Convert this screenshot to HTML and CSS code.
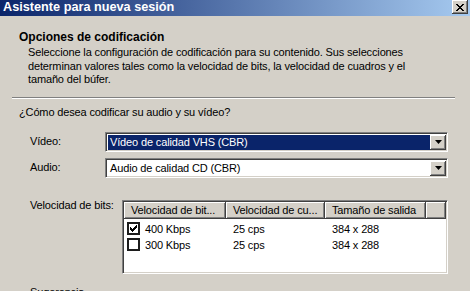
FILE: index.html
```html
<!DOCTYPE html>
<html lang="es">
<head>
    <meta charset="UTF-8">
    <meta name="viewport" content="width=device-width, initial-scale=1.0">
    <title>Asistente para nueva sesión</title>
    <link rel="stylesheet" href="styles.css">
</head>
<body>
    <div class="titlebar">
        <span class="title">Asistente para nueva sesión</span>
        <button class="close-btn" aria-label="Cerrar">
            <svg width="8" height="7" viewBox="0 0 8 7">
                <path d="M0 0h2v1h1v1h2v-1h1v-1h2v1h-1v1h-1v1h-1v1h1v1h1v1h1v1h-2v-1h-1v-1h-2v1h-1v1h-2v-1h1v-1h1v-1h1v-1h-1v-1h-1v-1h-1z" fill="#000"/>
            </svg>
        </button>
    </div>

    <div class="header">
        <h1 class="header-title">Opciones de codificación</h1>
        <p class="header-desc">Seleccione la configuración de codificación para su contenido. Sus selecciones<br>determinan valores tales como la velocidad de bits, la velocidad de cuadros y el<br>tamaño del búfer.</p>
    </div>

    <div class="separator"></div>

    <div class="content">
        <p class="question">¿Cómo desea codificar su audio y su vídeo?</p>

        <div class="field first">
            <label class="field-label">Vídeo:</label>
            <div class="combo">
                <span class="combo-value selected">Vídeo de calidad VHS (CBR)</span>
                <span class="combo-btn">
                    <svg width="7" height="4" viewBox="0 0 7 4"><path d="M0 0h7l-3.5 4z" fill="#000"/></svg>
                </span>
            </div>
        </div>

        <div class="field">
            <label class="field-label">Audio:</label>
            <div class="combo">
                <span class="combo-value">Audio de calidad CD (CBR)</span>
                <span class="combo-btn">
                    <svg width="7" height="4" viewBox="0 0 7 4"><path d="M0 0h7l-3.5 4z" fill="#000"/></svg>
                </span>
            </div>
        </div>

        <div class="field list-field">
            <label class="field-label wide">Velocidad de bits:</label>
            <div class="listview">
                <div class="list-header">
                    <span class="col col1">Velocidad de bit...</span>
                    <span class="col col2">Velocidad de cu...</span>
                    <span class="col col3">Tamaño de salida</span>
                    <span class="col col-fill"></span>
                </div>
                <div class="list-row">
                    <span class="cell col1">
                        <span class="checkbox checked">
                            <svg width="7" height="7" viewBox="0 0 7 7"><path d="M0 2h1v1h1v1h1v-1h1v-1h1v-1h1v-1h1v3h-1v1h-1v1h-1v1h-1v1h-1v-1h-1v-1h-1z" fill="#000"/></svg>
                        </span>400 Kbps
                    </span>
                    <span class="cell col2">25 cps</span>
                    <span class="cell col3">384 x 288</span>
                </div>
                <div class="list-row">
                    <span class="cell col1"><span class="checkbox"></span>300 Kbps</span>
                    <span class="cell col2">25 cps</span>
                    <span class="cell col3">384 x 288</span>
                </div>
            </div>
        </div>

        <p class="hint">Sugerencia</p>
    </div>
</body>
</html>
```

FILE: styles.css
```css
* {
    margin: 0;
    padding: 0;
    box-sizing: border-box;
}

body {
    background: #d4d0c8;
    color: #000;
    font-family: 'Liberation Sans', Arial, sans-serif;
    font-size: 11px;
    line-height: 13px;
    letter-spacing: -0.14px;
    overflow: hidden;
}

/* title bar */
.titlebar {
    height: 16px;
    display: flex;
    justify-content: space-between;
    align-items: flex-start;
    padding: 0 2px 0 3px;
    background: linear-gradient(to right, #0a246a, #a6caf0);
}

.title {
    color: #fff;
    font-weight: bold;
    font-size: 12.7px;
    line-height: 15px;
    letter-spacing: 0;
}

.close-btn {
    width: 16px;
    height: 14px;
    display: flex;
    align-items: center;
    justify-content: center;
    background: #d4d0c8;
    border: none;
    box-shadow: inset -1px -1px #404040, inset 1px 1px #fff, inset -2px -2px #808080;
}

/* header */
.header {
    padding: 14px 0 0 19px;
}

.header-title {
    font-size: 12px;
    font-weight: bold;
    line-height: 14px;
    letter-spacing: 0;
    margin-bottom: 2px;
}

.header-desc {
    padding-left: 9px;
    line-height: 13.5px;
}

.separator {
    margin: 10px 15px 0 12px;
    border-top: 1px solid #808080;
    border-bottom: 1px solid #fff;
}

/* body */
.content {
    padding: 7px 0 0 19px;
}

.field {
    display: flex;
    align-items: center;
    margin-top: 6px;
    padding-left: 11px;
}

.field.first {
    margin-top: 13px;
}

.field-label {
    width: 75px;
}

.field-label.wide {
    width: 92px;
}

.combo {
    width: 343px;
    height: 20px;
    display: flex;
    background: #fff;
    border-top: 1px solid #808080;
    border-left: 1px solid #808080;
    border-bottom: 1px solid #fff;
    border-right: 1px solid #fff;
    box-shadow: inset 1px 1px #404040, inset -1px -1px #d4d0c8;
    padding: 2px 1px 1px 2px;
}

.combo-value {
    flex: 1;
    padding-left: 2px;
    line-height: 14px;
}

.combo-value.selected {
    background: #0a246a;
    color: #fff;
}

.combo-btn {
    width: 16px;
    height: 15px;
    display: flex;
    align-items: center;
    justify-content: center;
    background: #d4d0c8;
    box-shadow: inset -1px -1px #404040, inset 1px 1px #fff, inset -2px -2px #808080;
}

/* list view */
.list-field {
    align-items: flex-start;
    margin-top: 22px;
}

.list-field .field-label {
    margin-top: -1px;
}

.listview {
    width: 326px;
    height: 74px;
    background: #fff;
    border-top: 1px solid #808080;
    border-left: 1px solid #808080;
    border-bottom: 1px solid #fff;
    border-right: 1px solid #fff;
    box-shadow: inset 1px 1px #404040, inset -1px -1px #d4d0c8;
    padding: 1px;
}

.list-header {
    display: flex;
    height: 17px;
}

.list-header .col {
    height: 17px;
    line-height: 16px;
    padding-left: 7px;
    background: #d4d0c8;
    box-shadow: inset -1px -1px #404040, inset 1px 1px #fff, inset -2px -2px #808080;
    white-space: nowrap;
    overflow: hidden;
}

.col1 {
    width: 102px;
}

.col2 {
    width: 99px;
}

.col3 {
    width: 101px;
}

.col-fill {
    flex: 1;
}

.list-row {
    display: flex;
    height: 16px;
    align-items: center;
}

.list-header + .list-row {
    margin-top: 2px;
}

.cell {
    padding-left: 7px;
    line-height: 16px;
    white-space: nowrap;
}

.cell.col1 {
    display: flex;
    align-items: center;
    padding-left: 3px;
}

.checkbox {
    width: 13px;
    height: 13px;
    margin-right: 5px;
    display: flex;
    align-items: center;
    justify-content: center;
    border: 2px solid #1c1c1c;
    background: #fff;
}

.hint {
    padding-left: 11px;
    margin-top: 12px;
}
```
